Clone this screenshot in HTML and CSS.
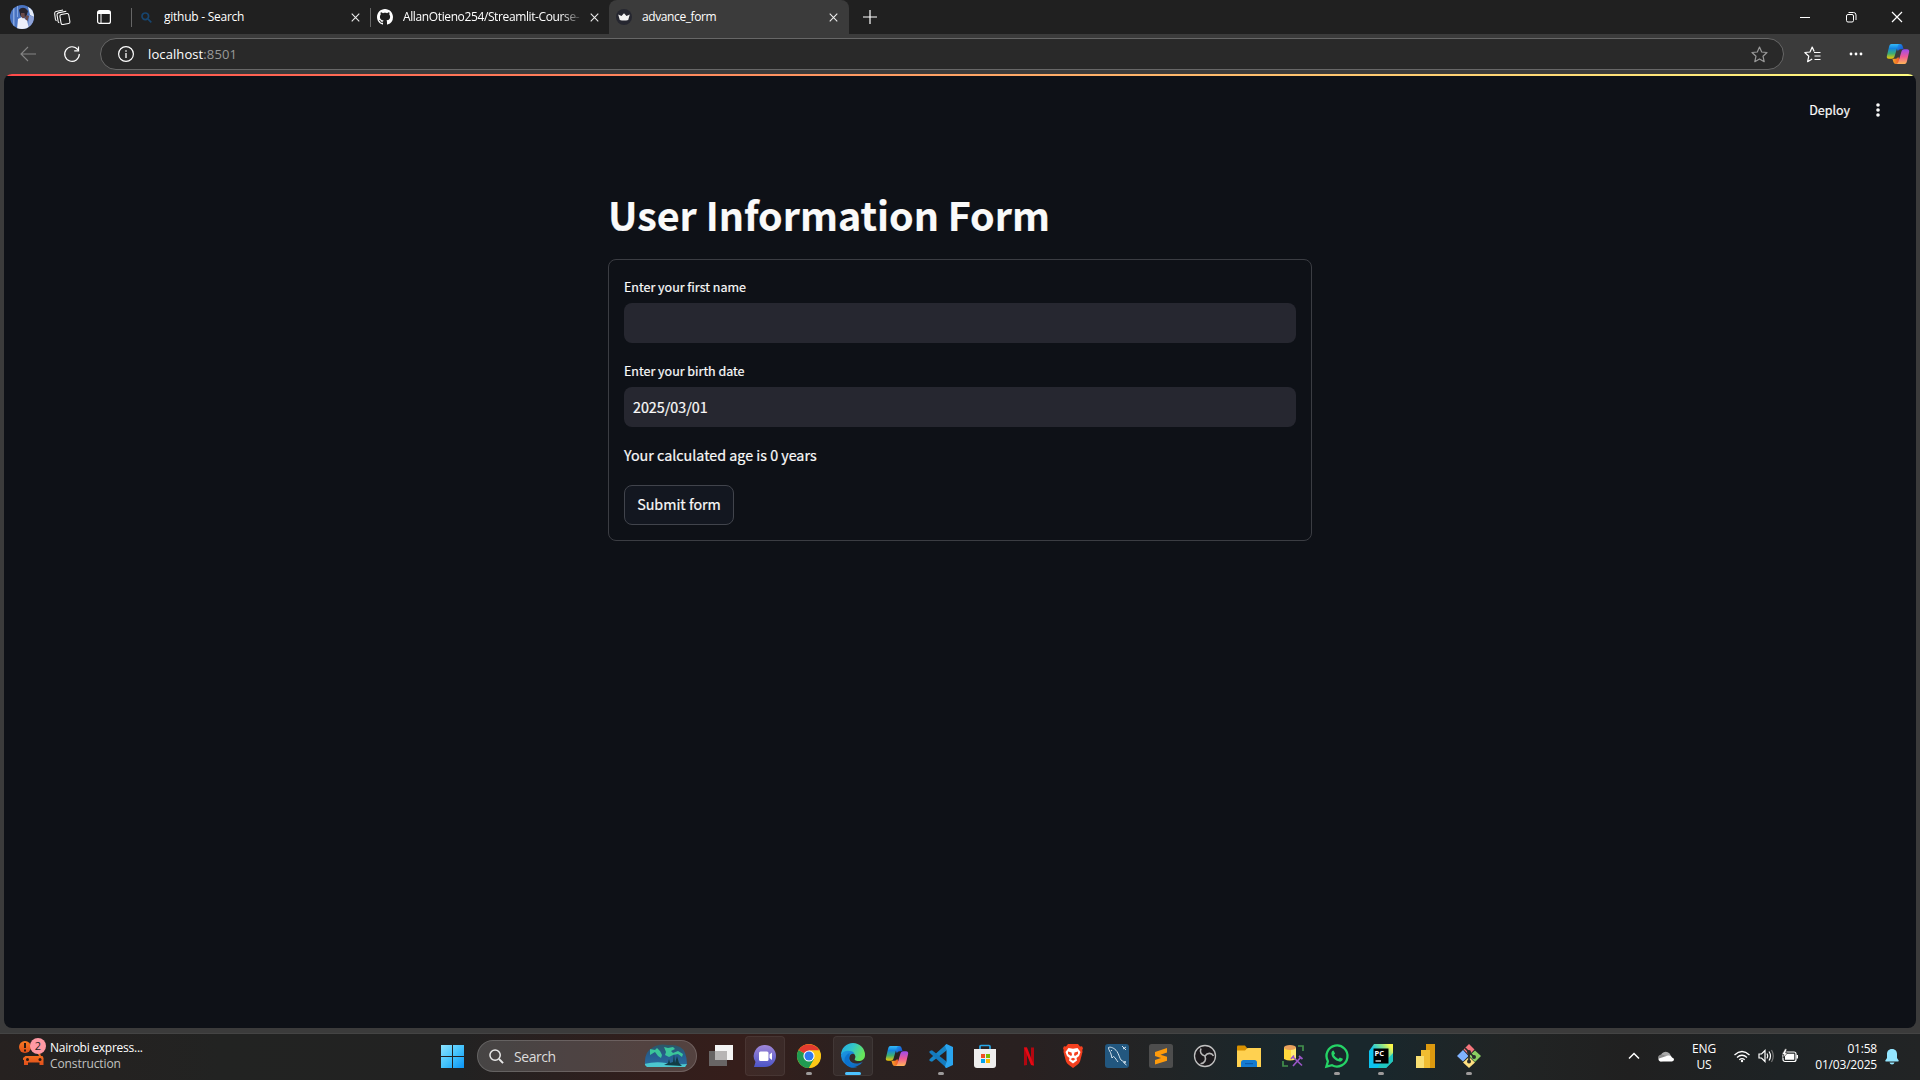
FILE: index.html
```html
<!DOCTYPE html>
<html lang="en">
<head>
<meta charset="utf-8">
<title>advance_form</title>
<link rel="stylesheet" href="styles.css">
</head>
<body>
<svg class="defs" width="0" height="0" aria-hidden="true">
  <defs>
    <linearGradient id="cpBlue" x1="0" y1="0" x2="0" y2="1"><stop offset="0" stop-color="#35b9f7"/><stop offset=".3" stop-color="#1486e0"/><stop offset=".65" stop-color="#3fae72"/><stop offset="1" stop-color="#f5c800"/></linearGradient>
    <linearGradient id="cpPink" x1="0" y1="0" x2="0" y2="1"><stop offset="0" stop-color="#9b4bf0"/><stop offset=".5" stop-color="#ee5a96"/><stop offset="1" stop-color="#ffb657"/></linearGradient>
    <linearGradient id="cpTop" x1="0" y1="0" x2="1" y2="1"><stop offset="0" stop-color="#1ba4ef"/><stop offset="1" stop-color="#1b3fc9"/></linearGradient>
    <linearGradient id="cpLow" x1="0" y1="0" x2="1" y2="0"><stop offset="0" stop-color="#f5a623"/><stop offset="1" stop-color="#f0502e"/></linearGradient>
    <symbol id="copilot" viewBox="0 0 24 24">
      <path d="M10 2h4.200c1.300 0 2 .8 2.400 2l1 3.300h-3c-1.500 0-2.300.7-2.700 2L10.500 6z" fill="url(#cpTop)"/>
      <path d="M14 22H9.800c-1.300 0-2-.8-2.400-2l-1-3.300h3c1.500 0 2.300-.7 2.700-2l1.500 3z" fill="url(#cpLow)"/>
      <path d="M5.500 2h8c-1.300.3-1.700 1.300-2 2.400L8.700 14c-.5 1.800-1.500 2.800-3.200 2.800H3c-2 0-2.600-1.300-2-3.300L3 5c.5-1.900 1-3 2.500-3z" fill="url(#cpBlue)"/>
      <path d="M18.500 22h-8c1.300-.3 1.700-1.300 2-2.400L15.300 10c.5-1.800 1.500-2.800 3.200-2.800H21c2 0 2.600 1.300 2 3.300L21 19c-.5 1.900-1 3-2.500 3z" fill="url(#cpPink)"/>
    </symbol>
    <symbol id="x" viewBox="0 0 10 10"><path d="M.8.8l8.400 8.400M9.200.8L.8 9.200" stroke="currentColor" stroke-width="1.200"/></symbol>
  </defs>
</svg>

<header class="tabbar">
  <div class="tools">
    <svg class="avatar" viewBox="0 0 24 24"><defs><clipPath id="av"><circle cx="12" cy="12" r="12"/></clipPath></defs><g clip-path="url(#av)"><path fill="#4a74c2" d="M0 0h24v24H0z"/><path fill="#86a7e0" d="M3 0h1.500v24H3zM7 0h1v12H7z"/><path fill="#e4ebf8" d="M18 2l6 3v7l-4-2z"/><path fill="#8fa3d8" d="M19 10l5 2v10l-6 2z"/><path fill="#eceefa" d="M8 14l4-2 5 3 2 9H7z"/><path fill="#29242f" d="M9 5c2-3 6-3 8 0l1 1-1.500 5-3 2-3-2z"/><path fill="#6b4a4a" d="M11 8h3.500l.5 4-2 1.500-2-2zM16 10l3 1-1.500 5-2.500-2z"/></g></svg>
    <svg class="i-work" viewBox="0 0 18 18" fill="none" stroke="#fff" stroke-width="1.100"><rect x="6.800" y="5.200" width="9.500" height="10.800" rx="1.800" transform="rotate(-10 11.500 10.600)"/><path d="M5.600 14.600Q4.600 14.400 4.400 13.300L3.200 6.200Q3 4.500 4.600 4.100L13 2.500M2.700 12.400Q1.700 12 1.500 11L.7 4.900Q.5 3 2.100 2.600L9.600 1"/></svg>
    <svg class="i-tabs" viewBox="0 0 14 14" fill="none" stroke="#fff"><rect x=".6" y=".6" width="12.800" height="12.800" rx="2" stroke-width="1.200"/><path d="M1 2.500h12" stroke-width="3"/><path d="M4 3v10.500"/></svg>
  </div>
  <div class="tab tab-search">
    <svg class="fav-search" viewBox="0 0 11 11" fill="none" stroke="#17456f" stroke-width="1.700"><circle cx="4.300" cy="4.300" r="3.300"/><path d="M6.800 6.800L10.300 10.300"/></svg>
    <span class="tab-label">github - Search</span>
    <svg class="close"><use href="#x"/></svg>
  </div>
  <div class="tab tab-github">
    <svg class="fav" viewBox="0 0 16 16"><path fill="#fff" d="M8 0C3.580 0 0 3.580 0 8c0 3.540 2.290 6.530 5.470 7.590.4.070.55-.17.55-.38 0-.19-.01-.82-.01-1.490-2.010.37-2.530-.49-2.690-.94-.09-.23-.48-.94-.82-1.130-.28-.15-.68-.52-.01-.53.63-.01 1.080.58 1.230.82.72 1.210 1.870.87 2.330.66.07-.52.28-.87.51-1.070-1.780-.2-3.640-.89-3.640-3.950 0-.87.31-1.590.82-2.150-.08-.2-.36-1.020.08-2.120 0 0 .67-.21 2.200.82.64-.18 1.320-.27 2-.27s1.360.09 2 .27c1.530-1.040 2.200-.82 2.200-.82.44 1.100.16 1.920.08 2.120.51.56.82 1.270.82 2.150 0 3.070-1.870 3.750-3.650 3.950.29.25.54.73.54 1.480 0 1.070-.01 1.930-.01 2.200 0 .21.15.46.55.38A8.010 8.010 0 0 0 16 8c0-4.420-3.580-8-8-8z"/></svg>
    <span class="tab-label fade">AllanOtieno254/Streamlit-Course-</span>
    <svg class="close"><use href="#x"/></svg>
  </div>
  <div class="tab tab-active">
    <svg class="fav" viewBox="0 0 16 16"><circle cx="8" cy="8" r="8" fill="#262730"/><path d="M2.200 5.500L5.500 7 8 4.300 10.500 7l3.300-1.500-1.600 5.500Q8 12 3.800 11z" fill="#f2f2f2"/></svg>
    <span class="tab-label">advance_form</span>
    <svg class="close"><use href="#x"/></svg>
  </div>
  <svg class="newtab" viewBox="0 0 14 14" stroke="#fff" stroke-width="1.200"><path d="M7 0v14M0 7h14"/></svg>
  <div class="window">
    <svg viewBox="0 0 12 12" fill="none" stroke="#fff"><path d="M1 6.500h10"/></svg>
    <svg viewBox="0 0 12 12" fill="none" stroke="#fff"><rect x="1.500" y="3.500" width="7" height="7.500" rx="1.500"/><path d="M3.500 1.500h5q2.500 0 2.500 2.500v5"/></svg>
    <svg viewBox="0 0 12 12" fill="none" stroke="#fff" stroke-width="1.200"><path d="M1 1l10 10M11 1L1 11"/></svg>
  </div>
</header>

<nav class="toolbar">
  <svg class="i-back" viewBox="0 0 16 16" fill="none" stroke="#858585" stroke-width="1.100"><path d="M8 1L1 8l7 7M1 8h15"/></svg>
  <svg class="i-reload" viewBox="0 0 16 16" fill="none" stroke="#fff" stroke-width="1.200"><path d="M15.300 8A7.300 7.300 0 1 1 13.800 3.600M14.500.5v4.300h-4.300"/></svg>
  <div class="address">
    <svg class="i-info" viewBox="0 0 16 16" fill="none" stroke="#fff"><circle cx="8" cy="8" r="7.400" stroke-width="1.200"/><path d="M8 7v5M8 4.200v1.500" stroke-width="1.300"/></svg>
    <span class="url">localhost<span class="port">:8501</span></span>
    <svg class="i-star" viewBox="0 0 17 17" fill="none" stroke="#999" stroke-width="1.200" stroke-linejoin="round"><path d="M8.500 1l2.200 5 5.300.5-4 3.700 1.200 5.500-4.700-2.800-4.700 2.800L5 10.200 1 6.500 6.300 6z"/></svg>
  </div>
  <svg class="i-favs" viewBox="0 0 17 17" fill="none" stroke="#fff" stroke-width="1.200" stroke-linejoin="round"><path d="M10.200 5.500L8.200 1 6 6l-5.200.5 4 3.700-1.200 5.500 4.600-2.800"/><path d="M10 6.500h6.500M10.500 10h6M10.500 13.500h6"/></svg>
  <svg class="i-more" viewBox="0 0 14 4" fill="#fff"><circle cx="2" cy="2" r="1.400"/><circle cx="7" cy="2" r="1.400"/><circle cx="12" cy="2" r="1.400"/></svg>
  <svg class="i-copilot"><use href="#copilot"/></svg>
</nav>

<div class="frame">
  <main class="page">
    <div class="decoration"></div>
    <div class="app-header">
      <span>Deploy</span>
      <svg class="i-menu" viewBox="0 0 4 14" fill="#fafafa"><circle cx="2" cy="2" r="1.800"/><circle cx="2" cy="7" r="1.800"/><circle cx="2" cy="12" r="1.800"/></svg>
    </div>
    <section class="content">
      <h1>User Information Form</h1>
      <form class="card">
        <label for="name">Enter your first name</label>
        <input id="name" type="text">
        <label class="second" for="date">Enter your birth date</label>
        <input id="date" type="text" value="2025/03/01">
        <p>Your calculated age is 0 years</p>
        <button type="button">Submit form</button>
      </form>
    </section>
  </main>
</div>

<footer class="taskbar">
  <div class="widget">
    <svg viewBox="0 0 28 32"><defs><linearGradient id="car" x2="0" y2="1"><stop stop-color="#fb7a22"/><stop offset="1" stop-color="#e04f1b"/></linearGradient></defs><circle cx="6" cy="12" r="6" fill="url(#car)"/><path d="M6 8v5M6 14.500v2" stroke="#2a1a14" stroke-width="2"/><path d="M18 17h2.500l1.500 4h1.500q1.500 2 1 4v5h-4v-2.500H9V30H5v-5H4v-2l2.500-2H20z" fill="url(#car)"/><circle cx="8.500" cy="24.500" r="1.500" fill="#2a1a14"/><circle cx="21" cy="24.500" r="1.500" fill="#2a1a14"/></svg>
    <span class="badge">2</span>
    <div class="news"><span>Nairobi express...</span><span class="dim">Construction</span></div>
  </div>

  <div class="apps">
    <svg class="start" viewBox="0 0 23 23"><defs><linearGradient id="win" gradientUnits="userSpaceOnUse" x1="0" y1="0" x2="23" y2="23"><stop stop-color="#8ce3ff"/><stop offset=".5" stop-color="#45c4fc"/><stop offset="1" stop-color="#0a94f5"/></linearGradient></defs><path fill="url(#win)" d="M0 0h11v11H0zM12 0h11v11H12zM0 12h11v11H0zM12 12h11v11H12z"/></svg>
    <div class="search">
      <svg class="lens" viewBox="0 0 16 16" fill="none" stroke="#e8e8e8"><circle cx="6.500" cy="6.500" r="5.500" stroke-width="1.600"/><path d="M10.700 10.700L15 15" stroke-width="2"/></svg>
      <span>Search</span>
      <svg class="aurora" viewBox="0 0 44 24"><defs><clipPath id="au"><path d="M1 21Q0 8 8 4 14-1 24 1 38 0 41 9 43 14 43 20L41 23H3z"/></clipPath><linearGradient id="sky" x2="0" y2="1"><stop stop-color="#2c5663"/><stop offset=".5" stop-color="#265e91"/><stop offset="1" stop-color="#2b6f9f"/></linearGradient></defs><g clip-path="url(#au)"><path fill="url(#sky)" d="M0 0h44v24H0z"/><path d="M6 5l5 1 2-2 3 3 2 4-1 3-3-2-3-4-5 3zM20 3l4 1 5-1 2 2-4 2 2 2 5-2 5 3-1 3-4-3-5 1-4 2-4-2 1-3z" fill="#3bc59a"/><path d="M0 20q12-3 22-1t22 1v5H0z" fill="#4cc7cf"/><path d="M20 21l4-2 1-4 1 4 3-1 1-8 1 9 2-7 2 7 3 3z" fill="#123c45"/></g></svg>
    </div>
    <div class="app"><svg viewBox="0 0 24 24"><path fill="#686565" d="M0 7h18v15H0z"/><path fill="#f4f4f4" d="M6 1h18v15H6z"/><path fill="#b7b5b5" d="M6 7h12v9H6z"/></svg></div>
    <div class="app open"><svg viewBox="0 0 24 24"><defs><linearGradient id="tm" x2="0" y2="1"><stop stop-color="#a087d8"/><stop offset="1" stop-color="#4c55c8"/></linearGradient></defs><path d="M12 1a11 11 0 1 1 0 22H1l1.500-5A11 11 0 0 1 12 1z" fill="url(#tm)"/><rect x="6" y="7.500" width="9.500" height="9.500" rx="1.500" fill="#fff"/><path d="M16.500 10.500l2.500-2v7.500l-2.500-2z" fill="#fff"/></svg></div>
    <div class="app running"><svg viewBox="0 0 24 24"><circle cx="12" cy="12" r="12" fill="#fdc816"/><path d="M12 12L1.600 6A12 12 0 0 0 12 24l5.200-9z" fill="#209b51"/><path d="M12 12L1.600 6A12 12 0 0 1 22.400 6.500H12z" fill="#e33b2e"/><path d="M22.400 6.500H12l5.200 8.500L12 24A12 12 0 0 0 22.400 6.500z" fill="#fdc816"/><circle cx="12" cy="12" r="5.600" fill="#fff"/><circle cx="12" cy="12" r="4.500" fill="#3079ee"/></svg></div>
    <div class="app open active"><svg viewBox="0 0 24 24"><defs><linearGradient id="ed" x2="1" y2=".4"><stop stop-color="#21a9e7"/><stop offset=".5" stop-color="#32c6c8"/><stop offset="1" stop-color="#67e65b"/></linearGradient><linearGradient id="ee" x2="1" y2="1"><stop stop-color="#1c9ae5"/><stop offset="1" stop-color="#1260b5"/></linearGradient></defs><path d="M0 11A12 12 0 0 1 24 11c0 4-3 6-6.500 6-3 0-4.500-1-3.500-2.500 1-1.500.5-5-3.500-5.500C6 8 1 8 0 11z" fill="url(#ed)"/><path d="M0 12C0 6 12 5 13.500 10 10 9 7.500 12 8.500 15.500 10 20 17 21 22 17.500A12 12 0 0 1 0 12z" fill="url(#ee)"/><path d="M8.500 12c-2 6 3 10.500 8 11-6 2.500-13-1-13-7 0-3 2-5.500 5-7z" fill="#0b72ce"/></svg></div>
    <div class="app"><svg><use href="#copilot"/></svg></div>
    <div class="app running"><svg viewBox="0 0 24 24"><path d="M17.500 0v6.500L3 17.800.8 17Q-.3 16 .8 15z" fill="#1785c6"/><path d="M17.500 24v-6.500L3 6.200.8 7Q-.3 8 .8 9z" fill="#147abd"/><path d="M17.500 0L24 3v18l-6.500 3Q16.500 24 16 22.500l1.500-5v-11L16 1.500z" fill="#2aa5ef"/></svg></div>
    <div class="app"><svg viewBox="0 0 24 24"><path d="M7 6V2.500Q7 1.500 8 1.500h8q1 0 1 1V6" fill="none" stroke="#27a7e8" stroke-width="1.700"/><path d="M1 5h22v16q0 3-3 3H4q-3 0-3-3z" fill="#eee"/><path fill="#f04e23" d="M8 10h4v4H8z"/><path fill="#7cb900" d="M13 10h4v4h-4z"/><path fill="#00a3ee" d="M8 15h4v4H8z"/><path fill="#fdb900" d="M13 15h4v4h-4z"/></svg></div>
    <div class="app"><svg viewBox="0 0 24 24"><path d="M7 3.500h3V21l-3 .5zM14 3.500h3v18l-3-.5z" fill="#b20710"/><path d="M7 3.500h3l7 18-3-.5z" fill="#e50914"/></svg></div>
    <div class="app"><svg viewBox="0 0 24 24"><path d="M7 0h10l2 2.500 2-.2 1 2-.7 1.700.2 2-2.500 9.500q-1 2-3 3.500l-4 3-4-3q-2-1.500-3-3.500L2.500 8l.2-2L2 4.300l1-2 2 .2z" fill="#f4401f"/><path d="M7.500 4l4.500.8 4.500-.8 3 4-1.500 4-2.500 2 .5 2.500-4 3-4-3 .5-2.500-2.500-2L4.500 8z" fill="#fff"/><path d="M7 7.500l3.500 1 .5 2.500-1 1-3-2zM17 7.500l-3.500 1-.5 2.500 1 1 3-2zM9.500 15l2.500-1.300 2.500 1.300-2.500 1.700z" fill="#f4401f"/></svg></div>
    <div class="app"><svg viewBox="0 0 24 24"><rect width="24" height="24" rx="3" fill="#22577f"/><path d="M3.500 3.500c2-1 6 .5 8.500 4 2 3 2.500 6.500 4 8.500 1.500 1.500 3.500 1.500 5 2l-2.500.5 3 2.500M3.500 3.500c0 3 2 4 2.500 6.500L7 14l1.500-1.500c2 1 3 4 4.500 5.500M17 2l4 4M21 3l-3 2M6 6l1 1" fill="none" stroke="#d6e4ee" stroke-width="1"/></svg></div>
    <div class="app"><svg viewBox="0 0 24 24"><rect width="24" height="24" rx="2.500" fill="#4d4d4d"/><path d="M18 4v4.500L11.500 10.700 18 12.700v4L6 20.500V16l6-2-6-2V8z" fill="#ff9b0b"/></svg></div>
    <div class="app"><svg viewBox="0 0 24 24"><circle cx="12" cy="12" r="10.500" fill="#1c1a1d" stroke="#c1c1c1" stroke-width="1.300"/><g fill="none" stroke="#b8b8b8" stroke-width="1.600"><path d="M12 12c-4-1-5.500-4-4-7.500"/><path d="M12 12c2.500-3.500 6.500-3.500 8.500-.2"/><path d="M12 12c1.500 4-.5 7.500-4.500 7.700"/></g></svg></div>
    <div class="app"><svg viewBox="0 0 24 24"><path fill="#d99100" d="M0 2.500Q0 1.500 1 1.500h7l2 2.500v4H0z"/><path fill="#ffd150" d="M0 6.500h8L10.500 4H24v19H0z"/><path fill="#157bd0" d="M4 23v-4.500Q4 16 6.500 16h11q2.500 0 2.500 2.500V23z"/><path fill="#0b5bad" d="M8 19h8v1.200H8z"/></svg></div>
    <div class="app"><svg viewBox="0 0 24 24"><path fill="#ffd83d" d="M3 3.500h12V15q-6 3-12 0z"/><path fill="#ffeb73" d="M10 4h5v11l-5 1z"/><ellipse cx="9" cy="3.500" rx="6" ry="2.500" fill="#e9a15c"/><path d="M17 2h5v5M2 17v5h5" fill="none" stroke="#43914c" stroke-width="1.700"/><path d="M12 13l9 8.500M20 13L12 22M10 15l3-3.500M18 12l3.500 3" stroke="#9955c5" stroke-width="1.700"/></svg></div>
    <div class="app running"><svg viewBox="0 0 24 24"><path d="M1.400 22.600l1.500-5.400A10.500 10.500 0 1 1 7 21.200z" fill="none" stroke="#25d366" stroke-width="2.300"/><path d="M8.500 6.500l1.600 3-1.200 1.600q1.500 2.700 4.400 3.900l1.500-1.600 3.100 1.400c-.2 2-1.700 3-3.500 2.800-4.300-.7-8-4.500-8-8 0-1.500.8-2.900 2.100-3.100z" fill="#25d366"/></svg></div>
    <div class="app running"><svg viewBox="0 0 24 24"><defs><linearGradient id="py" x1="0" y1=".8" x2="1" y2="0"><stop offset=".35" stop-color="#0cc3ef"/><stop offset=".7" stop-color="#8de58a"/><stop offset=".9" stop-color="#fcf84a"/></linearGradient></defs><path d="M5 0h19v17l-7 7H0V7z" fill="url(#py)"/><path d="M19.500 14L24 9v8l-7 7H8l4-4.500z" fill="#20c6c0"/><path d="M4.500 4.500h15v15h-15z"/><path d="M6.500 17h5.500" stroke="#fff" stroke-width="1.200"/></svg><span class="pc">PC</span></div>
    <div class="app"><svg viewBox="0 0 24 24"><path fill="#dc990f" d="M13 0h9v24h-9z"/><path fill="#f0bd32" d="M8 6h9v18H8z"/><path fill="#f9df72" d="M3 12h8v12H3z"/></svg></div>
    <div class="app running"><svg viewBox="0 0 24 24"><path fill="#f6757c" d="M12 0l5.500 5.500L12 11 6.500 5.500z"/><path fill="#80b3ff" d="M6 6l5.500 6L6 17.500 0 12z"/><path fill="#8bce62" d="M18 6.500l6 5.500-6 6-6-6z"/><path fill="#ffe080" d="M12 13l6 5.500-6 5.500-6-5.500z"/><path d="M8 4l4 4v10M12 8l5 5" fill="none" stroke="#292c2b" stroke-width="1.700"/><circle cx="12" cy="8" r="2" fill="#292c2b"/><circle cx="12" cy="17.500" r="2" fill="#292c2b"/><circle cx="17" cy="13" r="2" fill="#292c2b"/></svg></div>
  </div>

  <div class="tray">
    <svg class="t-caret" viewBox="0 0 12 8" fill="none" stroke="#fff" stroke-width="1.500"><path d="M1 6.500l5-5 5 5"/></svg>
    <svg class="t-cloud" viewBox="0 0 16 11"><path fill="#a9a9a9" d="M3 8a5 5 0 0 1 9.500-4L14 7z"/><path fill="#8c8c8c" d="M0 7q0-3.500 4-3.500l6 2-6 5Q0 10.500 0 7z"/><path fill="#fff" d="M2 10.500q-2-1.500-1-3l6-2 3-1q3-.5 4 2 2 .5 2 2t-2 2z"/></svg>
    <div class="lang"><span>ENG</span><span>US</span></div>
    <svg class="t-wifi" viewBox="0 0 16 13" fill="none" stroke="#fff" stroke-width="1.300"><path d="M.5 5Q8-2 15.500 5M3 7.500q5-4.500 10 0M5.300 9.800q2.700-2.400 5.400 0"/><circle cx="8" cy="11" r="1.200" fill="#fff" stroke="none"/></svg>
    <svg class="t-vol" viewBox="0 0 16 14" fill="none" stroke="#fff" stroke-width="1.200"><path d="M1 5h2.500L7 1.500v11L3.500 9H1z"/><path d="M9 4.500q1.500 2.500 0 5M11 2.500q3 4.500 0 9"/><path d="M13.500 1q3.500 6 0 12" stroke="#777"/></svg>
    <svg class="t-bat" viewBox="0 0 16 14"><rect x="1" y="3" width="13" height="9.500" rx="2" fill="none" stroke="#fff" stroke-width="1.200"/><path fill="#fff" d="M3 4.800h9.300v6H3zM14.500 6H16v3.500h-1.500z"/><path d="M3-.2L0 5.500h2L1 9l4.500-5H3.600L5 0z" fill="#fff" stroke="#222" stroke-width=".6"/></svg>
    <div class="clock"><span>01:58</span><span>01/03/2025</span></div>
    <svg class="t-bell" viewBox="0 0 14 16" fill="#93e5ff"><path d="M7 0c3.500 0 5 2.500 5 5v4l1.700 2.500q.3 1-.7 1H1q-1 0-.7-1L2 9V5c0-2.500 1.500-5 5-5zM4.500 13.500h5q-.5 2-2.500 2t-2.500-2z"/></svg>
  </div>
</footer>
</body>
</html>
```
FILE: styles.css
```css
* { box-sizing: border-box; }
html, body { height: 100%; overflow: hidden; }
body {
  margin: 0;
  display: flex;
  flex-direction: column;
  background: #3b3b3b;
  color: #fff;
  font-family: "Open Sans", "Noto Sans", sans-serif;
  font-size: 12px;
}
svg { display: block; flex: none; overflow: visible; }
.defs { position: absolute; }

/* tab strip */
.tabbar { height: 34px; flex: none; display: flex; align-items: center; background: #202020; }
.tools { width: 131px; height: 34px; padding-left: 10px; display: flex; align-items: center; }
.avatar { width: 24px; height: 24px; }
.i-work { width: 17px; height: 17px; margin-left: 20px; }
.i-tabs { width: 14px; height: 14px; margin-left: 26px; }
.tab { height: 34px; display: flex; align-items: center; }
.tab-search, .tab-github {
  background: linear-gradient(#666, #666) 0 8px / 1px 19px no-repeat;
}
.tab-search { width: 239px; padding-left: 10px; }
.tab-github { width: 239px; padding-left: 7px; }
.tab-active { width: 240px; padding-left: 7px; background: #3b3b3b; border-radius: 8px 8px 0 0; }
.fav { width: 16px; height: 16px; }
.fav-search { width: 11px; height: 11px; margin-right: 2px; }
.tab-label { margin-left: 10px; white-space: nowrap; overflow: hidden; letter-spacing: -.25px; line-height: 20px; }
.tab-search .tab-label { width: 187px; }
.tab-github .tab-label { width: 180px; letter-spacing: -.38px; }
.tab-active .tab-label { width: 187px; letter-spacing: -.4px; }
.fade { -webkit-mask-image: linear-gradient(90deg, #000 158px, transparent 180px); mask-image: linear-gradient(90deg, #000 158px, transparent 180px); }
.close { width: 9px; height: 9px; color: #eee; }
.tab-github .close { margin-left: 7px; }
.newtab { width: 14px; height: 14px; margin-left: 14px; }
.window { margin-left: auto; margin-right: 17px; display: flex; gap: 34px; }
.window svg { width: 12px; height: 12px; }

/* address bar */
.toolbar { height: 40px; flex: none; display: flex; align-items: center; padding-left: 20px; background: #3b3b3b; }
.i-back { width: 16px; height: 16px; }
.i-reload { width: 16px; height: 16px; margin-left: 28px; }
.address {
  width: 1684px; height: 32px; margin-left: 20px; padding: 0 15px 0 17px;
  display: flex; align-items: center;
  background: #292929; border: 1px solid #676767; border-radius: 16px;
}
.i-info { width: 16px; height: 16px; }
.url { margin-left: 14px; font-size: 13px; letter-spacing: .1px; line-height: 20px; }
.port { color: #999; }
.i-star { width: 17px; height: 17px; margin-left: auto; }
.i-favs { width: 17px; height: 17px; margin-left: 20px; }
.i-more { width: 14px; height: 4px; margin-left: 28px; }
.i-copilot { width: 24px; height: 24px; margin-left: 23px; }

/* app page */
.frame { flex: 1; padding: 0 4px 5px; background: #3b3b3b; }
.page {
  height: 100%; overflow: hidden; border-radius: 8px;
  background: #0e1117; color: #fafafa;
  font-family: "Noto Sans CJK SC", "Open Sans", sans-serif;
  -webkit-text-stroke: .2px #fafafa;
}
.decoration { height: 2px; background: linear-gradient(90deg, #ff4b4b, #fffd80); }
.app-header { height: 68px; padding-right: 36px; display: flex; align-items: center; justify-content: flex-end; font-size: 12.500px; line-height: 20px; }
.i-menu { width: 4px; height: 14px; margin-left: 26px; }
.content { width: 704px; margin: 0 auto; padding-top: 43px; }
h1 { margin: 0; height: 56px; line-height: 53px; font-size: 39.400px; font-weight: 700; white-space: nowrap; }
.card { margin: 16px 0 0; height: 282px; padding: 15px; border: 1px solid #3b3d43; border-radius: 8px; display: flex; flex-direction: column; align-items: stretch; }
.card label { height: 28px; line-height: 24px; font-size: 12.500px; }
.card .second { margin-top: 16px; }
.card input, .card button { -webkit-text-stroke: inherit; }
.card input {
  height: 40px; padding: 0 9px 2px; border: 0; border-radius: 8px;
  background: #262730; color: #fafafa; font: 14.300px "Noto Sans CJK SC", sans-serif;
}
.card p { margin: 16px 0; height: 26px; line-height: 24px; font-size: 14.300px; }
.card button {
  width: 110px; height: 40px; padding: 0 0 3px; border: 1px solid #41444c; border-radius: 8px;
  background: #131720; color: #fafafa; font: 14.300px "Noto Sans CJK SC", sans-serif;
}

/* taskbar */
.taskbar {
  height: 47px; flex: none; display: flex; align-items: flex-start;
  border-top: 1px solid #444;
  background: linear-gradient(90deg, #262120 0, #222322 220px, #222 460px, #321e1c 650px, #351e1b 740px, #2a2120 860px, #292020 1020px, #222425 1150px, #19272c 1290px, #19272c 1380px, #212424 1510px, #202020 1630px, #1e2325 1780px, #222425 100%);
}
.widget { position: relative; width: 435px; height: 46px; padding: 4px 0 0 19px; display: flex; }
.widget svg { width: 28px; height: 32px; margin-top: -3px; }
.badge {
  position: absolute; left: 30px; top: 4px; width: 16px; height: 16px; border-radius: 50%;
  background: #ff99a4; color: #222; font-size: 11px; line-height: 16px; text-align: center;
}
.news { margin-left: 3px; margin-top: 2px; display: flex; flex-direction: column; line-height: 16px; letter-spacing: -.25px; white-space: nowrap; }
.dim { color: #c2c2c2; letter-spacing: -.1px; }
.apps { width: 1056px; height: 44px; display: flex; align-items: center; }
.start { width: 23px; height: 23px; margin: 1px 13px 0 6px; }
.search {
  width: 220px; height: 32px; margin-right: 2px; padding: 0 8px 0 11px;
  display: flex; align-items: center; border: 1px solid rgba(255,255,255,.16); border-radius: 16px;
  background: rgba(255,255,255,.16); color: #dcdcdc; font-size: 14px; letter-spacing: -.45px;
}
.lens { width: 15px; height: 15px; margin-right: 10px; }
.aurora { width: 44px; height: 24px; margin-left: auto; }
.app { position: relative; width: 40px; height: 40px; margin: 0 2px; display: flex; align-items: center; justify-content: center; border-radius: 4px; flex: none; }
.app:nth-of-type(n+2) { left: -.500px; }
.app svg { width: 24px; height: 24px; }
.open { background: rgba(255,255,255,.05); box-shadow: inset 0 0 0 1px rgba(255,255,255,.06); }
.running::after, .active::after {
  content: ""; position: absolute; bottom: 1px; left: 17px; width: 6px; height: 3px; border-radius: 2px; background: #9d9a9a;
}
.active::after { left: 12px; width: 16px; background: #4cc2ff; }
.pc { position: absolute; left: 14px; top: 13px; font-size: 7.500px; line-height: 9px; font-weight: 700; }
.tray { flex: 1; height: 46px; display: flex; align-items: center; line-height: 16px; padding-left: 137px; }
.t-caret { width: 12px; height: 8px; margin-top: -3px; }
.t-cloud { width: 16px; height: 11px; margin-left: 18px; margin-top: -2px; }
.lang { width: 36px; margin-left: 12px; display: flex; flex-direction: column; align-items: center; letter-spacing: -.2px; }
.t-wifi { width: 16px; height: 13px; margin-left: 12px; margin-top: -2px; }
.t-vol { width: 16px; height: 14px; margin-left: 8px; margin-top: -2px; }
.t-bat { width: 16px; height: 14px; margin-left: 8px; margin-top: -3px; }
.clock { width: 79px; display: flex; flex-direction: column; align-items: flex-end; letter-spacing: -.2px; }
.t-bell { width: 14px; height: 16px; margin-left: 8px; margin-top: -1px; }
```
